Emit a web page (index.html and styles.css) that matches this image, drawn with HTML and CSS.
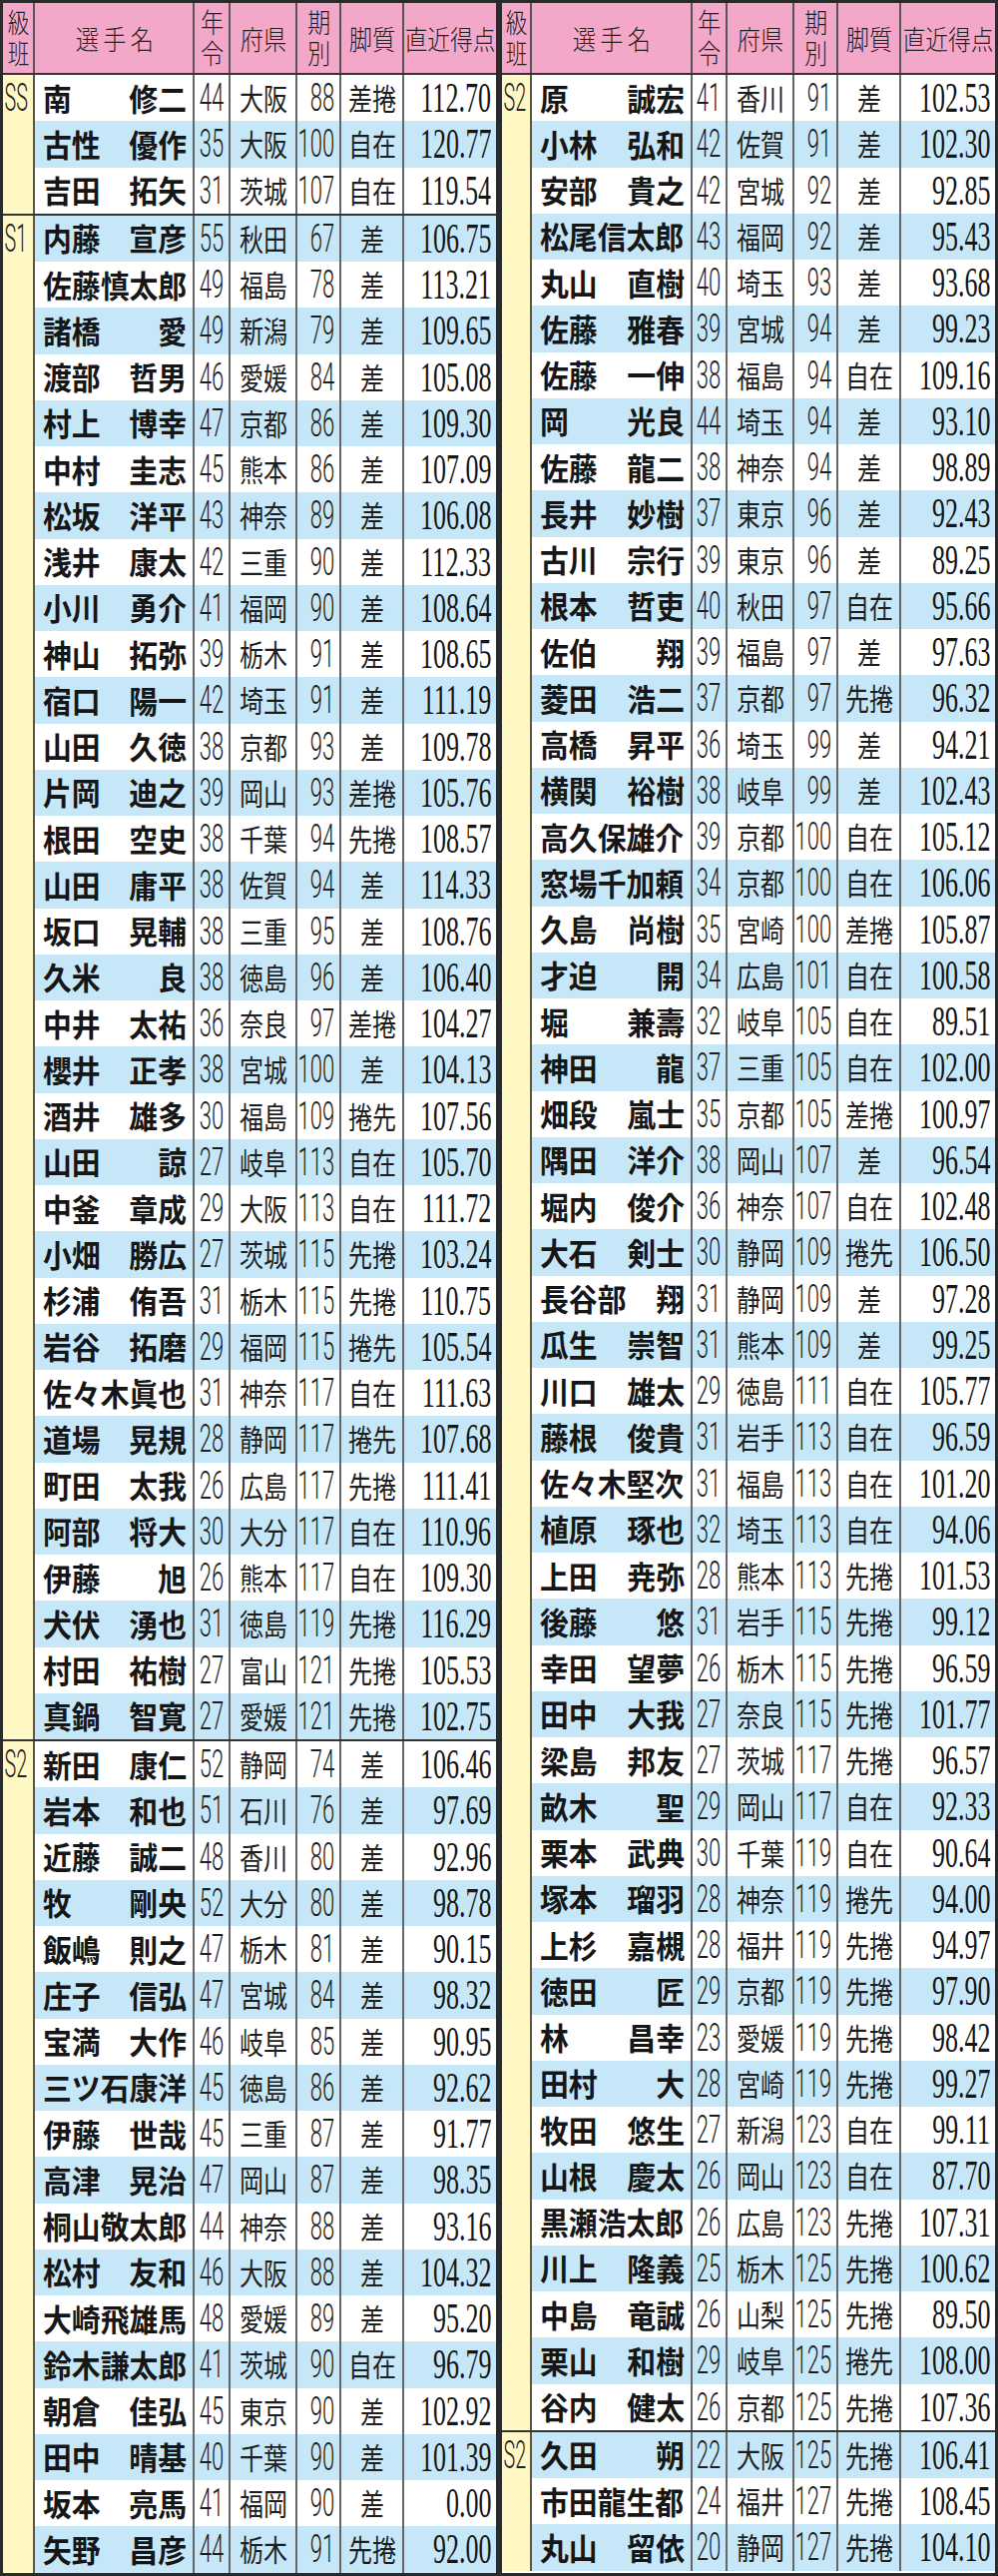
FILE: index.html
```html
<!DOCTYPE html>
<html lang="ja">
<head>
<meta charset="utf-8">
<title>選手一覧</title>
<link rel="stylesheet" href="styles.css">
</head>
<body>
<div class="board">
  <section class="half half-left">
    <div class="head">
      <div class="h-cls"><span class="stack">級班</span></div>
      <div class="h-name"><span>選手名</span></div>
      <div class="h-age"><span class="stack">年令</span></div>
      <div class="h-pref"><span>府県</span></div>
      <div class="h-term"><span class="stack">期別</span></div>
      <div class="h-style"><span>脚質</span></div>
      <div class="h-score"><span>直近得点</span></div>
    </div>
    <div class="group">
      <div class="cls"><span>SS</span></div>
      <div class="rows">
        <div class="row"><div class="name"><i>南</i><i>修二</i></div><div class="age"><span>44</span></div><div class="pref"><span>大阪</span></div><div class="term"><span>88</span></div><div class="style"><span>差捲</span></div><div class="score"><span>112.70</span></div></div>
        <div class="row b"><div class="name"><i>古性</i><i>優作</i></div><div class="age"><span>35</span></div><div class="pref"><span>大阪</span></div><div class="term"><span>100</span></div><div class="style"><span>自在</span></div><div class="score"><span>120.77</span></div></div>
        <div class="row"><div class="name"><i>吉田</i><i>拓矢</i></div><div class="age"><span>31</span></div><div class="pref"><span>茨城</span></div><div class="term"><span>107</span></div><div class="style"><span>自在</span></div><div class="score"><span>119.54</span></div></div>
      </div>
    </div>
    <div class="group">
      <div class="cls"><span>S1</span></div>
      <div class="rows">
        <div class="row b"><div class="name"><i>内藤</i><i>宣彦</i></div><div class="age"><span>55</span></div><div class="pref"><span>秋田</span></div><div class="term"><span>67</span></div><div class="style"><span>差</span></div><div class="score"><span>106.75</span></div></div>
        <div class="row"><div class="name"><i>佐藤慎太郎</i></div><div class="age"><span>49</span></div><div class="pref"><span>福島</span></div><div class="term"><span>78</span></div><div class="style"><span>差</span></div><div class="score"><span>113.21</span></div></div>
        <div class="row b"><div class="name"><i>諸橋</i><i>愛</i></div><div class="age"><span>49</span></div><div class="pref"><span>新潟</span></div><div class="term"><span>79</span></div><div class="style"><span>差</span></div><div class="score"><span>109.65</span></div></div>
        <div class="row"><div class="name"><i>渡部</i><i>哲男</i></div><div class="age"><span>46</span></div><div class="pref"><span>愛媛</span></div><div class="term"><span>84</span></div><div class="style"><span>差</span></div><div class="score"><span>105.08</span></div></div>
        <div class="row b"><div class="name"><i>村上</i><i>博幸</i></div><div class="age"><span>47</span></div><div class="pref"><span>京都</span></div><div class="term"><span>86</span></div><div class="style"><span>差</span></div><div class="score"><span>109.30</span></div></div>
        <div class="row"><div class="name"><i>中村</i><i>圭志</i></div><div class="age"><span>45</span></div><div class="pref"><span>熊本</span></div><div class="term"><span>86</span></div><div class="style"><span>差</span></div><div class="score"><span>107.09</span></div></div>
        <div class="row b"><div class="name"><i>松坂</i><i>洋平</i></div><div class="age"><span>43</span></div><div class="pref"><span>神奈</span></div><div class="term"><span>89</span></div><div class="style"><span>差</span></div><div class="score"><span>106.08</span></div></div>
        <div class="row"><div class="name"><i>浅井</i><i>康太</i></div><div class="age"><span>42</span></div><div class="pref"><span>三重</span></div><div class="term"><span>90</span></div><div class="style"><span>差</span></div><div class="score"><span>112.33</span></div></div>
        <div class="row b"><div class="name"><i>小川</i><i>勇介</i></div><div class="age"><span>41</span></div><div class="pref"><span>福岡</span></div><div class="term"><span>90</span></div><div class="style"><span>差</span></div><div class="score"><span>108.64</span></div></div>
        <div class="row"><div class="name"><i>神山</i><i>拓弥</i></div><div class="age"><span>39</span></div><div class="pref"><span>栃木</span></div><div class="term"><span>91</span></div><div class="style"><span>差</span></div><div class="score"><span>108.65</span></div></div>
        <div class="row b"><div class="name"><i>宿口</i><i>陽一</i></div><div class="age"><span>42</span></div><div class="pref"><span>埼玉</span></div><div class="term"><span>91</span></div><div class="style"><span>差</span></div><div class="score"><span>111.19</span></div></div>
        <div class="row"><div class="name"><i>山田</i><i>久徳</i></div><div class="age"><span>38</span></div><div class="pref"><span>京都</span></div><div class="term"><span>93</span></div><div class="style"><span>差</span></div><div class="score"><span>109.78</span></div></div>
        <div class="row b"><div class="name"><i>片岡</i><i>迪之</i></div><div class="age"><span>39</span></div><div class="pref"><span>岡山</span></div><div class="term"><span>93</span></div><div class="style"><span>差捲</span></div><div class="score"><span>105.76</span></div></div>
        <div class="row"><div class="name"><i>根田</i><i>空史</i></div><div class="age"><span>38</span></div><div class="pref"><span>千葉</span></div><div class="term"><span>94</span></div><div class="style"><span>先捲</span></div><div class="score"><span>108.57</span></div></div>
        <div class="row b"><div class="name"><i>山田</i><i>庸平</i></div><div class="age"><span>38</span></div><div class="pref"><span>佐賀</span></div><div class="term"><span>94</span></div><div class="style"><span>差</span></div><div class="score"><span>114.33</span></div></div>
        <div class="row"><div class="name"><i>坂口</i><i>晃輔</i></div><div class="age"><span>38</span></div><div class="pref"><span>三重</span></div><div class="term"><span>95</span></div><div class="style"><span>差</span></div><div class="score"><span>108.76</span></div></div>
        <div class="row b"><div class="name"><i>久米</i><i>良</i></div><div class="age"><span>38</span></div><div class="pref"><span>徳島</span></div><div class="term"><span>96</span></div><div class="style"><span>差</span></div><div class="score"><span>106.40</span></div></div>
        <div class="row"><div class="name"><i>中井</i><i>太祐</i></div><div class="age"><span>36</span></div><div class="pref"><span>奈良</span></div><div class="term"><span>97</span></div><div class="style"><span>差捲</span></div><div class="score"><span>104.27</span></div></div>
        <div class="row b"><div class="name"><i>櫻井</i><i>正孝</i></div><div class="age"><span>38</span></div><div class="pref"><span>宮城</span></div><div class="term"><span>100</span></div><div class="style"><span>差</span></div><div class="score"><span>104.13</span></div></div>
        <div class="row"><div class="name"><i>酒井</i><i>雄多</i></div><div class="age"><span>30</span></div><div class="pref"><span>福島</span></div><div class="term"><span>109</span></div><div class="style"><span>捲先</span></div><div class="score"><span>107.56</span></div></div>
        <div class="row b"><div class="name"><i>山田</i><i>諒</i></div><div class="age"><span>27</span></div><div class="pref"><span>岐阜</span></div><div class="term"><span>113</span></div><div class="style"><span>自在</span></div><div class="score"><span>105.70</span></div></div>
        <div class="row"><div class="name"><i>中釜</i><i>章成</i></div><div class="age"><span>29</span></div><div class="pref"><span>大阪</span></div><div class="term"><span>113</span></div><div class="style"><span>自在</span></div><div class="score"><span>111.72</span></div></div>
        <div class="row b"><div class="name"><i>小畑</i><i>勝広</i></div><div class="age"><span>27</span></div><div class="pref"><span>茨城</span></div><div class="term"><span>115</span></div><div class="style"><span>先捲</span></div><div class="score"><span>103.24</span></div></div>
        <div class="row"><div class="name"><i>杉浦</i><i>侑吾</i></div><div class="age"><span>31</span></div><div class="pref"><span>栃木</span></div><div class="term"><span>115</span></div><div class="style"><span>先捲</span></div><div class="score"><span>110.75</span></div></div>
        <div class="row b"><div class="name"><i>岩谷</i><i>拓磨</i></div><div class="age"><span>29</span></div><div class="pref"><span>福岡</span></div><div class="term"><span>115</span></div><div class="style"><span>捲先</span></div><div class="score"><span>105.54</span></div></div>
        <div class="row"><div class="name"><i>佐々木眞也</i></div><div class="age"><span>31</span></div><div class="pref"><span>神奈</span></div><div class="term"><span>117</span></div><div class="style"><span>自在</span></div><div class="score"><span>111.63</span></div></div>
        <div class="row b"><div class="name"><i>道場</i><i>晃規</i></div><div class="age"><span>28</span></div><div class="pref"><span>静岡</span></div><div class="term"><span>117</span></div><div class="style"><span>捲先</span></div><div class="score"><span>107.68</span></div></div>
        <div class="row"><div class="name"><i>町田</i><i>太我</i></div><div class="age"><span>26</span></div><div class="pref"><span>広島</span></div><div class="term"><span>117</span></div><div class="style"><span>先捲</span></div><div class="score"><span>111.41</span></div></div>
        <div class="row b"><div class="name"><i>阿部</i><i>将大</i></div><div class="age"><span>30</span></div><div class="pref"><span>大分</span></div><div class="term"><span>117</span></div><div class="style"><span>自在</span></div><div class="score"><span>110.96</span></div></div>
        <div class="row"><div class="name"><i>伊藤</i><i>旭</i></div><div class="age"><span>26</span></div><div class="pref"><span>熊本</span></div><div class="term"><span>117</span></div><div class="style"><span>自在</span></div><div class="score"><span>109.30</span></div></div>
        <div class="row b"><div class="name"><i>犬伏</i><i>湧也</i></div><div class="age"><span>31</span></div><div class="pref"><span>徳島</span></div><div class="term"><span>119</span></div><div class="style"><span>先捲</span></div><div class="score"><span>116.29</span></div></div>
        <div class="row"><div class="name"><i>村田</i><i>祐樹</i></div><div class="age"><span>27</span></div><div class="pref"><span>富山</span></div><div class="term"><span>121</span></div><div class="style"><span>先捲</span></div><div class="score"><span>105.53</span></div></div>
        <div class="row b"><div class="name"><i>真鍋</i><i>智寛</i></div><div class="age"><span>27</span></div><div class="pref"><span>愛媛</span></div><div class="term"><span>121</span></div><div class="style"><span>先捲</span></div><div class="score"><span>102.75</span></div></div>
      </div>
    </div>
    <div class="group">
      <div class="cls"><span>S2</span></div>
      <div class="rows">
        <div class="row"><div class="name"><i>新田</i><i>康仁</i></div><div class="age"><span>52</span></div><div class="pref"><span>静岡</span></div><div class="term"><span>74</span></div><div class="style"><span>差</span></div><div class="score"><span>106.46</span></div></div>
        <div class="row b"><div class="name"><i>岩本</i><i>和也</i></div><div class="age"><span>51</span></div><div class="pref"><span>石川</span></div><div class="term"><span>76</span></div><div class="style"><span>差</span></div><div class="score"><span>97.69</span></div></div>
        <div class="row"><div class="name"><i>近藤</i><i>誠二</i></div><div class="age"><span>48</span></div><div class="pref"><span>香川</span></div><div class="term"><span>80</span></div><div class="style"><span>差</span></div><div class="score"><span>92.96</span></div></div>
        <div class="row b"><div class="name"><i>牧</i><i>剛央</i></div><div class="age"><span>52</span></div><div class="pref"><span>大分</span></div><div class="term"><span>80</span></div><div class="style"><span>差</span></div><div class="score"><span>98.78</span></div></div>
        <div class="row"><div class="name"><i>飯嶋</i><i>則之</i></div><div class="age"><span>47</span></div><div class="pref"><span>栃木</span></div><div class="term"><span>81</span></div><div class="style"><span>差</span></div><div class="score"><span>90.15</span></div></div>
        <div class="row b"><div class="name"><i>庄子</i><i>信弘</i></div><div class="age"><span>47</span></div><div class="pref"><span>宮城</span></div><div class="term"><span>84</span></div><div class="style"><span>差</span></div><div class="score"><span>98.32</span></div></div>
        <div class="row"><div class="name"><i>宝満</i><i>大作</i></div><div class="age"><span>46</span></div><div class="pref"><span>岐阜</span></div><div class="term"><span>85</span></div><div class="style"><span>差</span></div><div class="score"><span>90.95</span></div></div>
        <div class="row b"><div class="name"><i>三ツ石康洋</i></div><div class="age"><span>45</span></div><div class="pref"><span>徳島</span></div><div class="term"><span>86</span></div><div class="style"><span>差</span></div><div class="score"><span>92.62</span></div></div>
        <div class="row"><div class="name"><i>伊藤</i><i>世哉</i></div><div class="age"><span>45</span></div><div class="pref"><span>三重</span></div><div class="term"><span>87</span></div><div class="style"><span>差</span></div><div class="score"><span>91.77</span></div></div>
        <div class="row b"><div class="name"><i>高津</i><i>晃治</i></div><div class="age"><span>47</span></div><div class="pref"><span>岡山</span></div><div class="term"><span>87</span></div><div class="style"><span>差</span></div><div class="score"><span>98.35</span></div></div>
        <div class="row"><div class="name"><i>桐山敬太郎</i></div><div class="age"><span>44</span></div><div class="pref"><span>神奈</span></div><div class="term"><span>88</span></div><div class="style"><span>差</span></div><div class="score"><span>93.16</span></div></div>
        <div class="row b"><div class="name"><i>松村</i><i>友和</i></div><div class="age"><span>46</span></div><div class="pref"><span>大阪</span></div><div class="term"><span>88</span></div><div class="style"><span>差</span></div><div class="score"><span>104.32</span></div></div>
        <div class="row"><div class="name"><i>大崎飛雄馬</i></div><div class="age"><span>48</span></div><div class="pref"><span>愛媛</span></div><div class="term"><span>89</span></div><div class="style"><span>差</span></div><div class="score"><span>95.20</span></div></div>
        <div class="row b"><div class="name"><i>鈴木謙太郎</i></div><div class="age"><span>41</span></div><div class="pref"><span>茨城</span></div><div class="term"><span>90</span></div><div class="style"><span>自在</span></div><div class="score"><span>96.79</span></div></div>
        <div class="row"><div class="name"><i>朝倉</i><i>佳弘</i></div><div class="age"><span>45</span></div><div class="pref"><span>東京</span></div><div class="term"><span>90</span></div><div class="style"><span>差</span></div><div class="score"><span>102.92</span></div></div>
        <div class="row b"><div class="name"><i>田中</i><i>晴基</i></div><div class="age"><span>40</span></div><div class="pref"><span>千葉</span></div><div class="term"><span>90</span></div><div class="style"><span>差</span></div><div class="score"><span>101.39</span></div></div>
        <div class="row"><div class="name"><i>坂本</i><i>亮馬</i></div><div class="age"><span>41</span></div><div class="pref"><span>福岡</span></div><div class="term"><span>90</span></div><div class="style"><span>差</span></div><div class="score"><span>0.00</span></div></div>
        <div class="row b"><div class="name"><i>矢野</i><i>昌彦</i></div><div class="age"><span>44</span></div><div class="pref"><span>栃木</span></div><div class="term"><span>91</span></div><div class="style"><span>先捲</span></div><div class="score"><span>92.00</span></div></div>
      </div>
    </div>
  </section>

  <section class="half half-right">
    <div class="head">
      <div class="h-cls"><span class="stack">級班</span></div>
      <div class="h-name"><span>選手名</span></div>
      <div class="h-age"><span class="stack">年令</span></div>
      <div class="h-pref"><span>府県</span></div>
      <div class="h-term"><span class="stack">期別</span></div>
      <div class="h-style"><span>脚質</span></div>
      <div class="h-score"><span>直近得点</span></div>
    </div>
    <div class="group">
      <div class="cls"><span>S2</span></div>
      <div class="rows">
        <div class="row"><div class="name"><i>原</i><i>誠宏</i></div><div class="age"><span>41</span></div><div class="pref"><span>香川</span></div><div class="term"><span>91</span></div><div class="style"><span>差</span></div><div class="score"><span>102.53</span></div></div>
        <div class="row b"><div class="name"><i>小林</i><i>弘和</i></div><div class="age"><span>42</span></div><div class="pref"><span>佐賀</span></div><div class="term"><span>91</span></div><div class="style"><span>差</span></div><div class="score"><span>102.30</span></div></div>
        <div class="row"><div class="name"><i>安部</i><i>貴之</i></div><div class="age"><span>42</span></div><div class="pref"><span>宮城</span></div><div class="term"><span>92</span></div><div class="style"><span>差</span></div><div class="score"><span>92.85</span></div></div>
        <div class="row b"><div class="name"><i>松尾信太郎</i></div><div class="age"><span>43</span></div><div class="pref"><span>福岡</span></div><div class="term"><span>92</span></div><div class="style"><span>差</span></div><div class="score"><span>95.43</span></div></div>
        <div class="row"><div class="name"><i>丸山</i><i>直樹</i></div><div class="age"><span>40</span></div><div class="pref"><span>埼玉</span></div><div class="term"><span>93</span></div><div class="style"><span>差</span></div><div class="score"><span>93.68</span></div></div>
        <div class="row b"><div class="name"><i>佐藤</i><i>雅春</i></div><div class="age"><span>39</span></div><div class="pref"><span>宮城</span></div><div class="term"><span>94</span></div><div class="style"><span>差</span></div><div class="score"><span>99.23</span></div></div>
        <div class="row"><div class="name"><i>佐藤</i><i>一伸</i></div><div class="age"><span>38</span></div><div class="pref"><span>福島</span></div><div class="term"><span>94</span></div><div class="style"><span>自在</span></div><div class="score"><span>109.16</span></div></div>
        <div class="row b"><div class="name"><i>岡</i><i>光良</i></div><div class="age"><span>44</span></div><div class="pref"><span>埼玉</span></div><div class="term"><span>94</span></div><div class="style"><span>差</span></div><div class="score"><span>93.10</span></div></div>
        <div class="row"><div class="name"><i>佐藤</i><i>龍二</i></div><div class="age"><span>38</span></div><div class="pref"><span>神奈</span></div><div class="term"><span>94</span></div><div class="style"><span>差</span></div><div class="score"><span>98.89</span></div></div>
        <div class="row b"><div class="name"><i>長井</i><i>妙樹</i></div><div class="age"><span>37</span></div><div class="pref"><span>東京</span></div><div class="term"><span>96</span></div><div class="style"><span>差</span></div><div class="score"><span>92.43</span></div></div>
        <div class="row"><div class="name"><i>古川</i><i>宗行</i></div><div class="age"><span>39</span></div><div class="pref"><span>東京</span></div><div class="term"><span>96</span></div><div class="style"><span>差</span></div><div class="score"><span>89.25</span></div></div>
        <div class="row b"><div class="name"><i>根本</i><i>哲吏</i></div><div class="age"><span>40</span></div><div class="pref"><span>秋田</span></div><div class="term"><span>97</span></div><div class="style"><span>自在</span></div><div class="score"><span>95.66</span></div></div>
        <div class="row"><div class="name"><i>佐伯</i><i>翔</i></div><div class="age"><span>39</span></div><div class="pref"><span>福島</span></div><div class="term"><span>97</span></div><div class="style"><span>差</span></div><div class="score"><span>97.63</span></div></div>
        <div class="row b"><div class="name"><i>菱田</i><i>浩二</i></div><div class="age"><span>37</span></div><div class="pref"><span>京都</span></div><div class="term"><span>97</span></div><div class="style"><span>先捲</span></div><div class="score"><span>96.32</span></div></div>
        <div class="row"><div class="name"><i>高橋</i><i>昇平</i></div><div class="age"><span>36</span></div><div class="pref"><span>埼玉</span></div><div class="term"><span>99</span></div><div class="style"><span>差</span></div><div class="score"><span>94.21</span></div></div>
        <div class="row b"><div class="name"><i>横関</i><i>裕樹</i></div><div class="age"><span>38</span></div><div class="pref"><span>岐阜</span></div><div class="term"><span>99</span></div><div class="style"><span>差</span></div><div class="score"><span>102.43</span></div></div>
        <div class="row"><div class="name"><i>高久保雄介</i></div><div class="age"><span>39</span></div><div class="pref"><span>京都</span></div><div class="term"><span>100</span></div><div class="style"><span>自在</span></div><div class="score"><span>105.12</span></div></div>
        <div class="row b"><div class="name"><i>窓場千加頼</i></div><div class="age"><span>34</span></div><div class="pref"><span>京都</span></div><div class="term"><span>100</span></div><div class="style"><span>自在</span></div><div class="score"><span>106.06</span></div></div>
        <div class="row"><div class="name"><i>久島</i><i>尚樹</i></div><div class="age"><span>35</span></div><div class="pref"><span>宮崎</span></div><div class="term"><span>100</span></div><div class="style"><span>差捲</span></div><div class="score"><span>105.87</span></div></div>
        <div class="row b"><div class="name"><i>才迫</i><i>開</i></div><div class="age"><span>34</span></div><div class="pref"><span>広島</span></div><div class="term"><span>101</span></div><div class="style"><span>自在</span></div><div class="score"><span>100.58</span></div></div>
        <div class="row"><div class="name"><i>堀</i><i>兼壽</i></div><div class="age"><span>32</span></div><div class="pref"><span>岐阜</span></div><div class="term"><span>105</span></div><div class="style"><span>自在</span></div><div class="score"><span>89.51</span></div></div>
        <div class="row b"><div class="name"><i>神田</i><i>龍</i></div><div class="age"><span>37</span></div><div class="pref"><span>三重</span></div><div class="term"><span>105</span></div><div class="style"><span>自在</span></div><div class="score"><span>102.00</span></div></div>
        <div class="row"><div class="name"><i>畑段</i><i>嵐士</i></div><div class="age"><span>35</span></div><div class="pref"><span>京都</span></div><div class="term"><span>105</span></div><div class="style"><span>差捲</span></div><div class="score"><span>100.97</span></div></div>
        <div class="row b"><div class="name"><i>隅田</i><i>洋介</i></div><div class="age"><span>38</span></div><div class="pref"><span>岡山</span></div><div class="term"><span>107</span></div><div class="style"><span>差</span></div><div class="score"><span>96.54</span></div></div>
        <div class="row"><div class="name"><i>堀内</i><i>俊介</i></div><div class="age"><span>36</span></div><div class="pref"><span>神奈</span></div><div class="term"><span>107</span></div><div class="style"><span>自在</span></div><div class="score"><span>102.48</span></div></div>
        <div class="row b"><div class="name"><i>大石</i><i>剣士</i></div><div class="age"><span>30</span></div><div class="pref"><span>静岡</span></div><div class="term"><span>109</span></div><div class="style"><span>捲先</span></div><div class="score"><span>106.50</span></div></div>
        <div class="row"><div class="name"><i>長谷部</i><i>翔</i></div><div class="age"><span>31</span></div><div class="pref"><span>静岡</span></div><div class="term"><span>109</span></div><div class="style"><span>差</span></div><div class="score"><span>97.28</span></div></div>
        <div class="row b"><div class="name"><i>瓜生</i><i>崇智</i></div><div class="age"><span>31</span></div><div class="pref"><span>熊本</span></div><div class="term"><span>109</span></div><div class="style"><span>差</span></div><div class="score"><span>99.25</span></div></div>
        <div class="row"><div class="name"><i>川口</i><i>雄太</i></div><div class="age"><span>29</span></div><div class="pref"><span>徳島</span></div><div class="term"><span>111</span></div><div class="style"><span>自在</span></div><div class="score"><span>105.77</span></div></div>
        <div class="row b"><div class="name"><i>藤根</i><i>俊貴</i></div><div class="age"><span>31</span></div><div class="pref"><span>岩手</span></div><div class="term"><span>113</span></div><div class="style"><span>自在</span></div><div class="score"><span>96.59</span></div></div>
        <div class="row"><div class="name"><i>佐々木堅次</i></div><div class="age"><span>31</span></div><div class="pref"><span>福島</span></div><div class="term"><span>113</span></div><div class="style"><span>自在</span></div><div class="score"><span>101.20</span></div></div>
        <div class="row b"><div class="name"><i>植原</i><i>琢也</i></div><div class="age"><span>32</span></div><div class="pref"><span>埼玉</span></div><div class="term"><span>113</span></div><div class="style"><span>自在</span></div><div class="score"><span>94.06</span></div></div>
        <div class="row"><div class="name"><i>上田</i><i>尭弥</i></div><div class="age"><span>28</span></div><div class="pref"><span>熊本</span></div><div class="term"><span>113</span></div><div class="style"><span>先捲</span></div><div class="score"><span>101.53</span></div></div>
        <div class="row b"><div class="name"><i>後藤</i><i>悠</i></div><div class="age"><span>31</span></div><div class="pref"><span>岩手</span></div><div class="term"><span>115</span></div><div class="style"><span>先捲</span></div><div class="score"><span>99.12</span></div></div>
        <div class="row"><div class="name"><i>幸田</i><i>望夢</i></div><div class="age"><span>26</span></div><div class="pref"><span>栃木</span></div><div class="term"><span>115</span></div><div class="style"><span>先捲</span></div><div class="score"><span>96.59</span></div></div>
        <div class="row b"><div class="name"><i>田中</i><i>大我</i></div><div class="age"><span>27</span></div><div class="pref"><span>奈良</span></div><div class="term"><span>115</span></div><div class="style"><span>先捲</span></div><div class="score"><span>101.77</span></div></div>
        <div class="row"><div class="name"><i>梁島</i><i>邦友</i></div><div class="age"><span>27</span></div><div class="pref"><span>茨城</span></div><div class="term"><span>117</span></div><div class="style"><span>先捲</span></div><div class="score"><span>96.57</span></div></div>
        <div class="row b"><div class="name"><i>畝木</i><i>聖</i></div><div class="age"><span>29</span></div><div class="pref"><span>岡山</span></div><div class="term"><span>117</span></div><div class="style"><span>自在</span></div><div class="score"><span>92.33</span></div></div>
        <div class="row"><div class="name"><i>栗本</i><i>武典</i></div><div class="age"><span>30</span></div><div class="pref"><span>千葉</span></div><div class="term"><span>119</span></div><div class="style"><span>自在</span></div><div class="score"><span>90.64</span></div></div>
        <div class="row b"><div class="name"><i>塚本</i><i>瑠羽</i></div><div class="age"><span>28</span></div><div class="pref"><span>神奈</span></div><div class="term"><span>119</span></div><div class="style"><span>捲先</span></div><div class="score"><span>94.00</span></div></div>
        <div class="row"><div class="name"><i>上杉</i><i>嘉槻</i></div><div class="age"><span>28</span></div><div class="pref"><span>福井</span></div><div class="term"><span>119</span></div><div class="style"><span>先捲</span></div><div class="score"><span>94.97</span></div></div>
        <div class="row b"><div class="name"><i>徳田</i><i>匠</i></div><div class="age"><span>29</span></div><div class="pref"><span>京都</span></div><div class="term"><span>119</span></div><div class="style"><span>先捲</span></div><div class="score"><span>97.90</span></div></div>
        <div class="row"><div class="name"><i>林</i><i>昌幸</i></div><div class="age"><span>23</span></div><div class="pref"><span>愛媛</span></div><div class="term"><span>119</span></div><div class="style"><span>先捲</span></div><div class="score"><span>98.42</span></div></div>
        <div class="row b"><div class="name"><i>田村</i><i>大</i></div><div class="age"><span>28</span></div><div class="pref"><span>宮崎</span></div><div class="term"><span>119</span></div><div class="style"><span>先捲</span></div><div class="score"><span>99.27</span></div></div>
        <div class="row"><div class="name"><i>牧田</i><i>悠生</i></div><div class="age"><span>27</span></div><div class="pref"><span>新潟</span></div><div class="term"><span>123</span></div><div class="style"><span>自在</span></div><div class="score"><span>99.11</span></div></div>
        <div class="row b"><div class="name"><i>山根</i><i>慶太</i></div><div class="age"><span>26</span></div><div class="pref"><span>岡山</span></div><div class="term"><span>123</span></div><div class="style"><span>自在</span></div><div class="score"><span>87.70</span></div></div>
        <div class="row"><div class="name"><i>黒瀬浩太郎</i></div><div class="age"><span>26</span></div><div class="pref"><span>広島</span></div><div class="term"><span>123</span></div><div class="style"><span>先捲</span></div><div class="score"><span>107.31</span></div></div>
        <div class="row b"><div class="name"><i>川上</i><i>隆義</i></div><div class="age"><span>25</span></div><div class="pref"><span>栃木</span></div><div class="term"><span>125</span></div><div class="style"><span>先捲</span></div><div class="score"><span>100.62</span></div></div>
        <div class="row"><div class="name"><i>中島</i><i>竜誠</i></div><div class="age"><span>26</span></div><div class="pref"><span>山梨</span></div><div class="term"><span>125</span></div><div class="style"><span>先捲</span></div><div class="score"><span>89.50</span></div></div>
        <div class="row b"><div class="name"><i>栗山</i><i>和樹</i></div><div class="age"><span>29</span></div><div class="pref"><span>岐阜</span></div><div class="term"><span>125</span></div><div class="style"><span>捲先</span></div><div class="score"><span>108.00</span></div></div>
        <div class="row"><div class="name"><i>谷内</i><i>健太</i></div><div class="age"><span>26</span></div><div class="pref"><span>京都</span></div><div class="term"><span>125</span></div><div class="style"><span>先捲</span></div><div class="score"><span>107.36</span></div></div>
      </div>
    </div>
    <div class="group">
      <div class="cls"><span>S2</span></div>
      <div class="rows">
        <div class="row b"><div class="name"><i>久田</i><i>朔</i></div><div class="age"><span>22</span></div><div class="pref"><span>大阪</span></div><div class="term"><span>125</span></div><div class="style"><span>先捲</span></div><div class="score"><span>106.41</span></div></div>
        <div class="row"><div class="name"><i>市田龍生都</i></div><div class="age"><span>24</span></div><div class="pref"><span>福井</span></div><div class="term"><span>127</span></div><div class="style"><span>先捲</span></div><div class="score"><span>108.45</span></div></div>
        <div class="row b"><div class="name"><i>丸山</i><i>留依</i></div><div class="age"><span>20</span></div><div class="pref"><span>静岡</span></div><div class="term"><span>127</span></div><div class="style"><span>先捲</span></div><div class="score"><span>104.10</span></div></div>
      </div>
    </div>
  </section>
</div>
</body>
</html>
```

FILE: styles.css
```css
* {
  box-sizing: border-box;
  margin: 0;
  padding: 0;
}

html, body {
  margin: 0;
  background: #ffffff;
}

.board {
  width: 1000px;
  height: 2580px;
  border: 3px solid #2a2a2a;
  display: flex;
  background: #ffffff;
  color: #1c1c1c;
  overflow: hidden;
}

.half {
  width: 497px;
  display: flex;
  flex-direction: column;
}

.half-left {
  border-right: 3px solid #2a2a2a;
  --c-cls: 32px;
  --c-data: 160px 36px 67px 44px 63px 92px;
}

.half-right {
  border-left: 3px solid #2a2a2a;
  --c-cls: 30px;
  --c-data: 161px 35px 67px 44px 63px 94px;
}

/* ---------- header ---------- */
.head {
  display: grid;
  grid-template-columns: var(--c-cls) var(--c-data);
  height: 72px;
  background: #f3a8ca;
  border-bottom: 2px solid #333333;
  font-family: "Noto Sans CJK JP", sans-serif;
  font-weight: 300;
  font-size: 27px;
  line-height: 1;
  color: #222222;
}

.head > div {
  display: flex;
  align-items: center;
  justify-content: center;
  border-right: 2px solid #555555;
  overflow: visible;
}

.head > div:last-child {
  border-right: none;
}

.head span {
  display: inline-block;
  white-space: nowrap;
  text-align: center;
  transform: scaleX(0.86);
  transform-origin: center;
}

.head span.stack {
  writing-mode: vertical-rl;
  text-orientation: upright;
  letter-spacing: 4px;
  margin-bottom: -4px;
  position: relative;
  top: 0;
}

.head .h-cls span {
  transform: scaleX(0.8);
}

.head .h-name span {
  letter-spacing: 5px;
  margin-right: -5px;
}

.head .h-score span {
  transform: scaleX(0.84);
}

/* ---------- groups ---------- */
.group {
  display: grid;
  grid-template-columns: var(--c-cls) 1fr;
}

.group + .group {
  border-top: 2px solid #333333;
}

.cls {
  background: #fff8c4;
  border-right: 2px solid #555555;
}

.cls span {
  display: flex;
  align-items: center;
  height: 46.26px;
  padding-left: 3px;
  font-family: Roboto, "Liberation Sans", sans-serif;
  font-weight: 300;
  font-size: 38px;
  line-height: 1;
  color: #222222;
  transform: scaleX(0.52);
  transform-origin: left center;
}

.rows {
  display: flex;
  flex-direction: column;
}

.row {
  display: grid;
  grid-template-columns: var(--c-data);
  height: 46.26px;
  background: #ffffff;
}

.row.b {
  background: #c6e7f8;
}

.row > div {
  display: flex;
  align-items: center;
  border-right: 2px solid #666666;
  overflow: visible;
  min-width: 0;
}

.row > div:last-child {
  border-right: none;
}

.row span,
.row i {
  display: inline-block;
  white-space: nowrap;
  font-style: normal;
  line-height: 1;
  flex: none;
}

/* name */
.name {
  justify-content: space-between;
  padding: 0 6px 0 8px;
  font-family: "Noto Sans CJK JP", sans-serif;
  font-weight: 700;
  font-size: 31px;
  color: #161616;
}

.name i {
  transform: scaleX(0.93);
  transform-origin: left center;
  position: relative;
  top: -1px;
}

.name i + i {
  transform-origin: right center;
}

/* age & term */
.age {
  justify-content: center;
}

.age span,
.term span {
  font-family: Roboto, "Liberation Sans", sans-serif;
  font-weight: 300;
  font-size: 38px;
  transform: scaleX(0.58);
  transform-origin: center;
  color: #1e1e1e;
}

.term {
  justify-content: flex-end;
  padding-right: 5px;
}

.term span {
  transform-origin: right center;
}

/* prefecture & style */
.pref,
.style {
  justify-content: center;
}

.pref span,
.style span {
  font-family: "Noto Sans CJK JP", sans-serif;
  font-weight: 400;
  font-size: 30px;
  transform: scaleX(0.8);
  transform-origin: center;
  color: #1e1e1e;
  position: relative;
  top: -1px;
}

/* score */
.score {
  justify-content: flex-end;
  padding-right: 5px;
}

.score span {
  font-family: "Liberation Serif", serif;
  font-weight: 400;
  font-size: 42px;
  transform: scaleX(0.62);
  transform-origin: right center;
  color: #161616;
}
```
